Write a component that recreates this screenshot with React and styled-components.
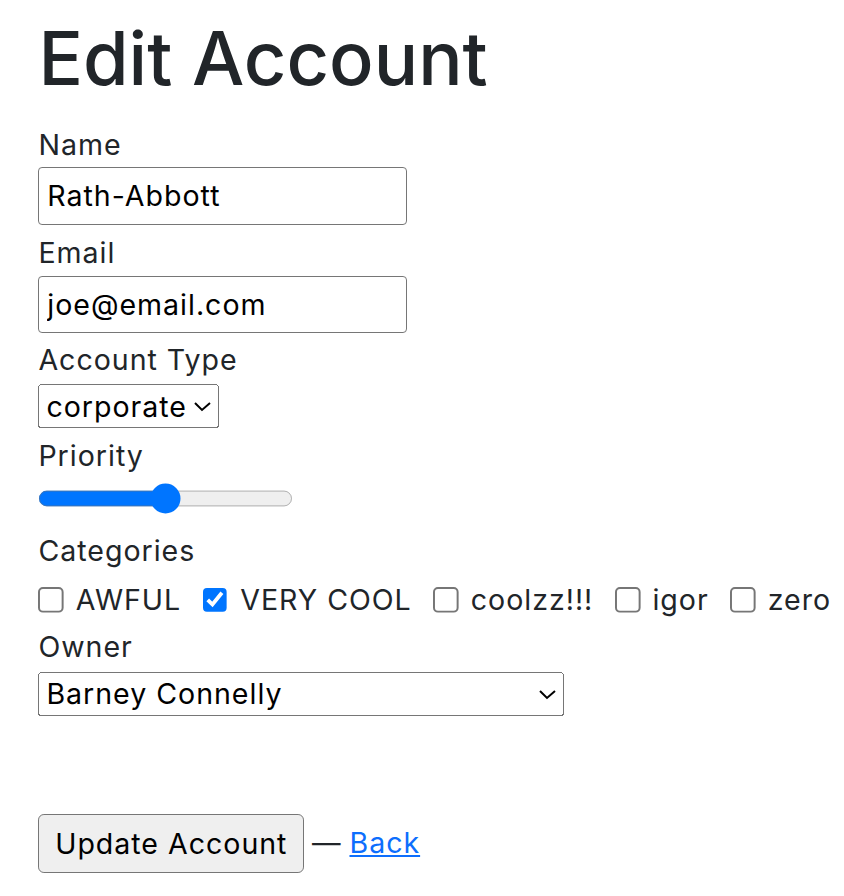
import React, { useState } from "react";
import styled, { createGlobalStyle } from "styled-components";

const GlobalStyle = createGlobalStyle`
  body {
    margin: 0;
    background: #fff;
    color: #212529;
    font-family: Inter, "Noto Sans", sans-serif;
  }
`;

// the reference is a retina capture, so the whole page is scaled up
const Page = styled.div`
  zoom: 1.97;
  padding: 8px 0 20px 19.5px;
  font-size: 14.5px;
  line-height: 21px;
  letter-spacing: 0.5px;
`;

const Title = styled.h1`
  margin: 0 0 12px;
  font-size: 37.5px;
  font-weight: 500;
  line-height: 43px;
  letter-spacing: 0;
`;

const Form = styled.form`
  display: flex;
  flex-direction: column;
  align-items: flex-start;
`;

const Field = styled.div`
  display: flex;
  flex-direction: column;
  align-items: flex-start;
  margin-bottom: ${(p) => p.$gap || 3}px;
`;

const Label = styled.label`
  display: block;
  line-height: 21px;
`;

const TextInput = styled.input`
  box-sizing: border-box;
  width: 187px;
  height: 29px;
  margin: 1px 0 0;
  padding: 0 4px;
  border: 1px solid #767676;
  border-radius: 2px;
  font-family: inherit;
  font-size: 14.5px;
  letter-spacing: 0.5px;
  color: #000;
  background: #fff;
`;

const Select = styled.select`
  box-sizing: border-box;
  width: ${(p) => (p.$width ? `${p.$width}px` : "auto")};
  height: 22.5px;
  margin: 2px 0 0;
  font-family: inherit;
  font-size: 14.5px;
  letter-spacing: 0.5px;
  color: #000;
`;

const Range = styled.input`
  width: 129px;
  margin: 3px 0 0;
`;

const Checks = styled.div`
  display: flex;
  align-items: center;
  gap: 11px;
  margin-top: 4px;
  line-height: 21px;
`;

const Check = styled.label`
  display: flex;
  align-items: center;
  gap: 6px;
`;

const Box = styled.input`
  margin: 0;
  width: 13px;
  height: 13px;
`;

const Actions = styled.div`
  display: flex;
  align-items: center;
  gap: 4px;
  margin-top: 46.5px;
`;

const Button = styled.button`
  box-sizing: border-box;
  height: 30px;
  padding: 0 8px;
  border: 1px solid #767676;
  border-radius: 3px;
  background: #efefef;
  color: #000;
  font-family: inherit;
  font-size: 14.5px;
  letter-spacing: 0.5px;
`;

const BackLink = styled.a`
  color: #0d6efd;
  text-decoration: underline;
`;

const categories = [
  { name: "AWFUL", on: false },
  { name: "VERY COOL", on: true },
  { name: "coolzz!!!", on: false },
  { name: "igor", on: false },
  { name: "zero", on: false },
];

export default function App() {
  const [name, setName] = useState("Rath-Abbott");
  const [email, setEmail] = useState("joe@email.com");
  const [cats, setCats] = useState(categories);

  return (
    <Page>
      <GlobalStyle />
      <Title>Edit Account</Title>
      <Form onSubmit={(e) => e.preventDefault()}>
        <Field $gap={4}>
          <Label>Name</Label>
          <TextInput value={name} onChange={(e) => setName(e.target.value)} />
        </Field>
        <Field>
          <Label>Email</Label>
          <TextInput value={email} onChange={(e) => setEmail(e.target.value)} />
        </Field>
        <Field $gap={3.5}>
          <Label>Account Type</Label>
          <Select defaultValue="corporate">
            <option value="personal">personal</option>
            <option value="corporate">corporate</option>
          </Select>
        </Field>
        <Field $gap={8}>
          <Label>Priority</Label>
          <Range type="range" min="0" max="100" defaultValue="50" />
        </Field>
        <Field>
          <Label>Categories</Label>
          <Checks>
            {cats.map((c, i) => (
              <Check key={c.name}>
                <Box
                  type="checkbox"
                  checked={c.on}
                  onChange={() =>
                    setCats(cats.map((x, j) => (j === i ? { ...x, on: !x.on } : x)))
                  }
                />
                {c.name}
              </Check>
            ))}
          </Checks>
        </Field>
        <Field>
          <Label>Owner</Label>
          <Select $width={267} defaultValue="barney">
            <option value="barney">Barney Connelly</option>
            <option value="other">Someone Else With A Long Name</option>
          </Select>
        </Field>
        <Actions>
          <Button type="submit">Update Account</Button>
          <span>—</span>
          <BackLink href="#">Back</BackLink>
        </Actions>
      </Form>
    </Page>
  );
}
